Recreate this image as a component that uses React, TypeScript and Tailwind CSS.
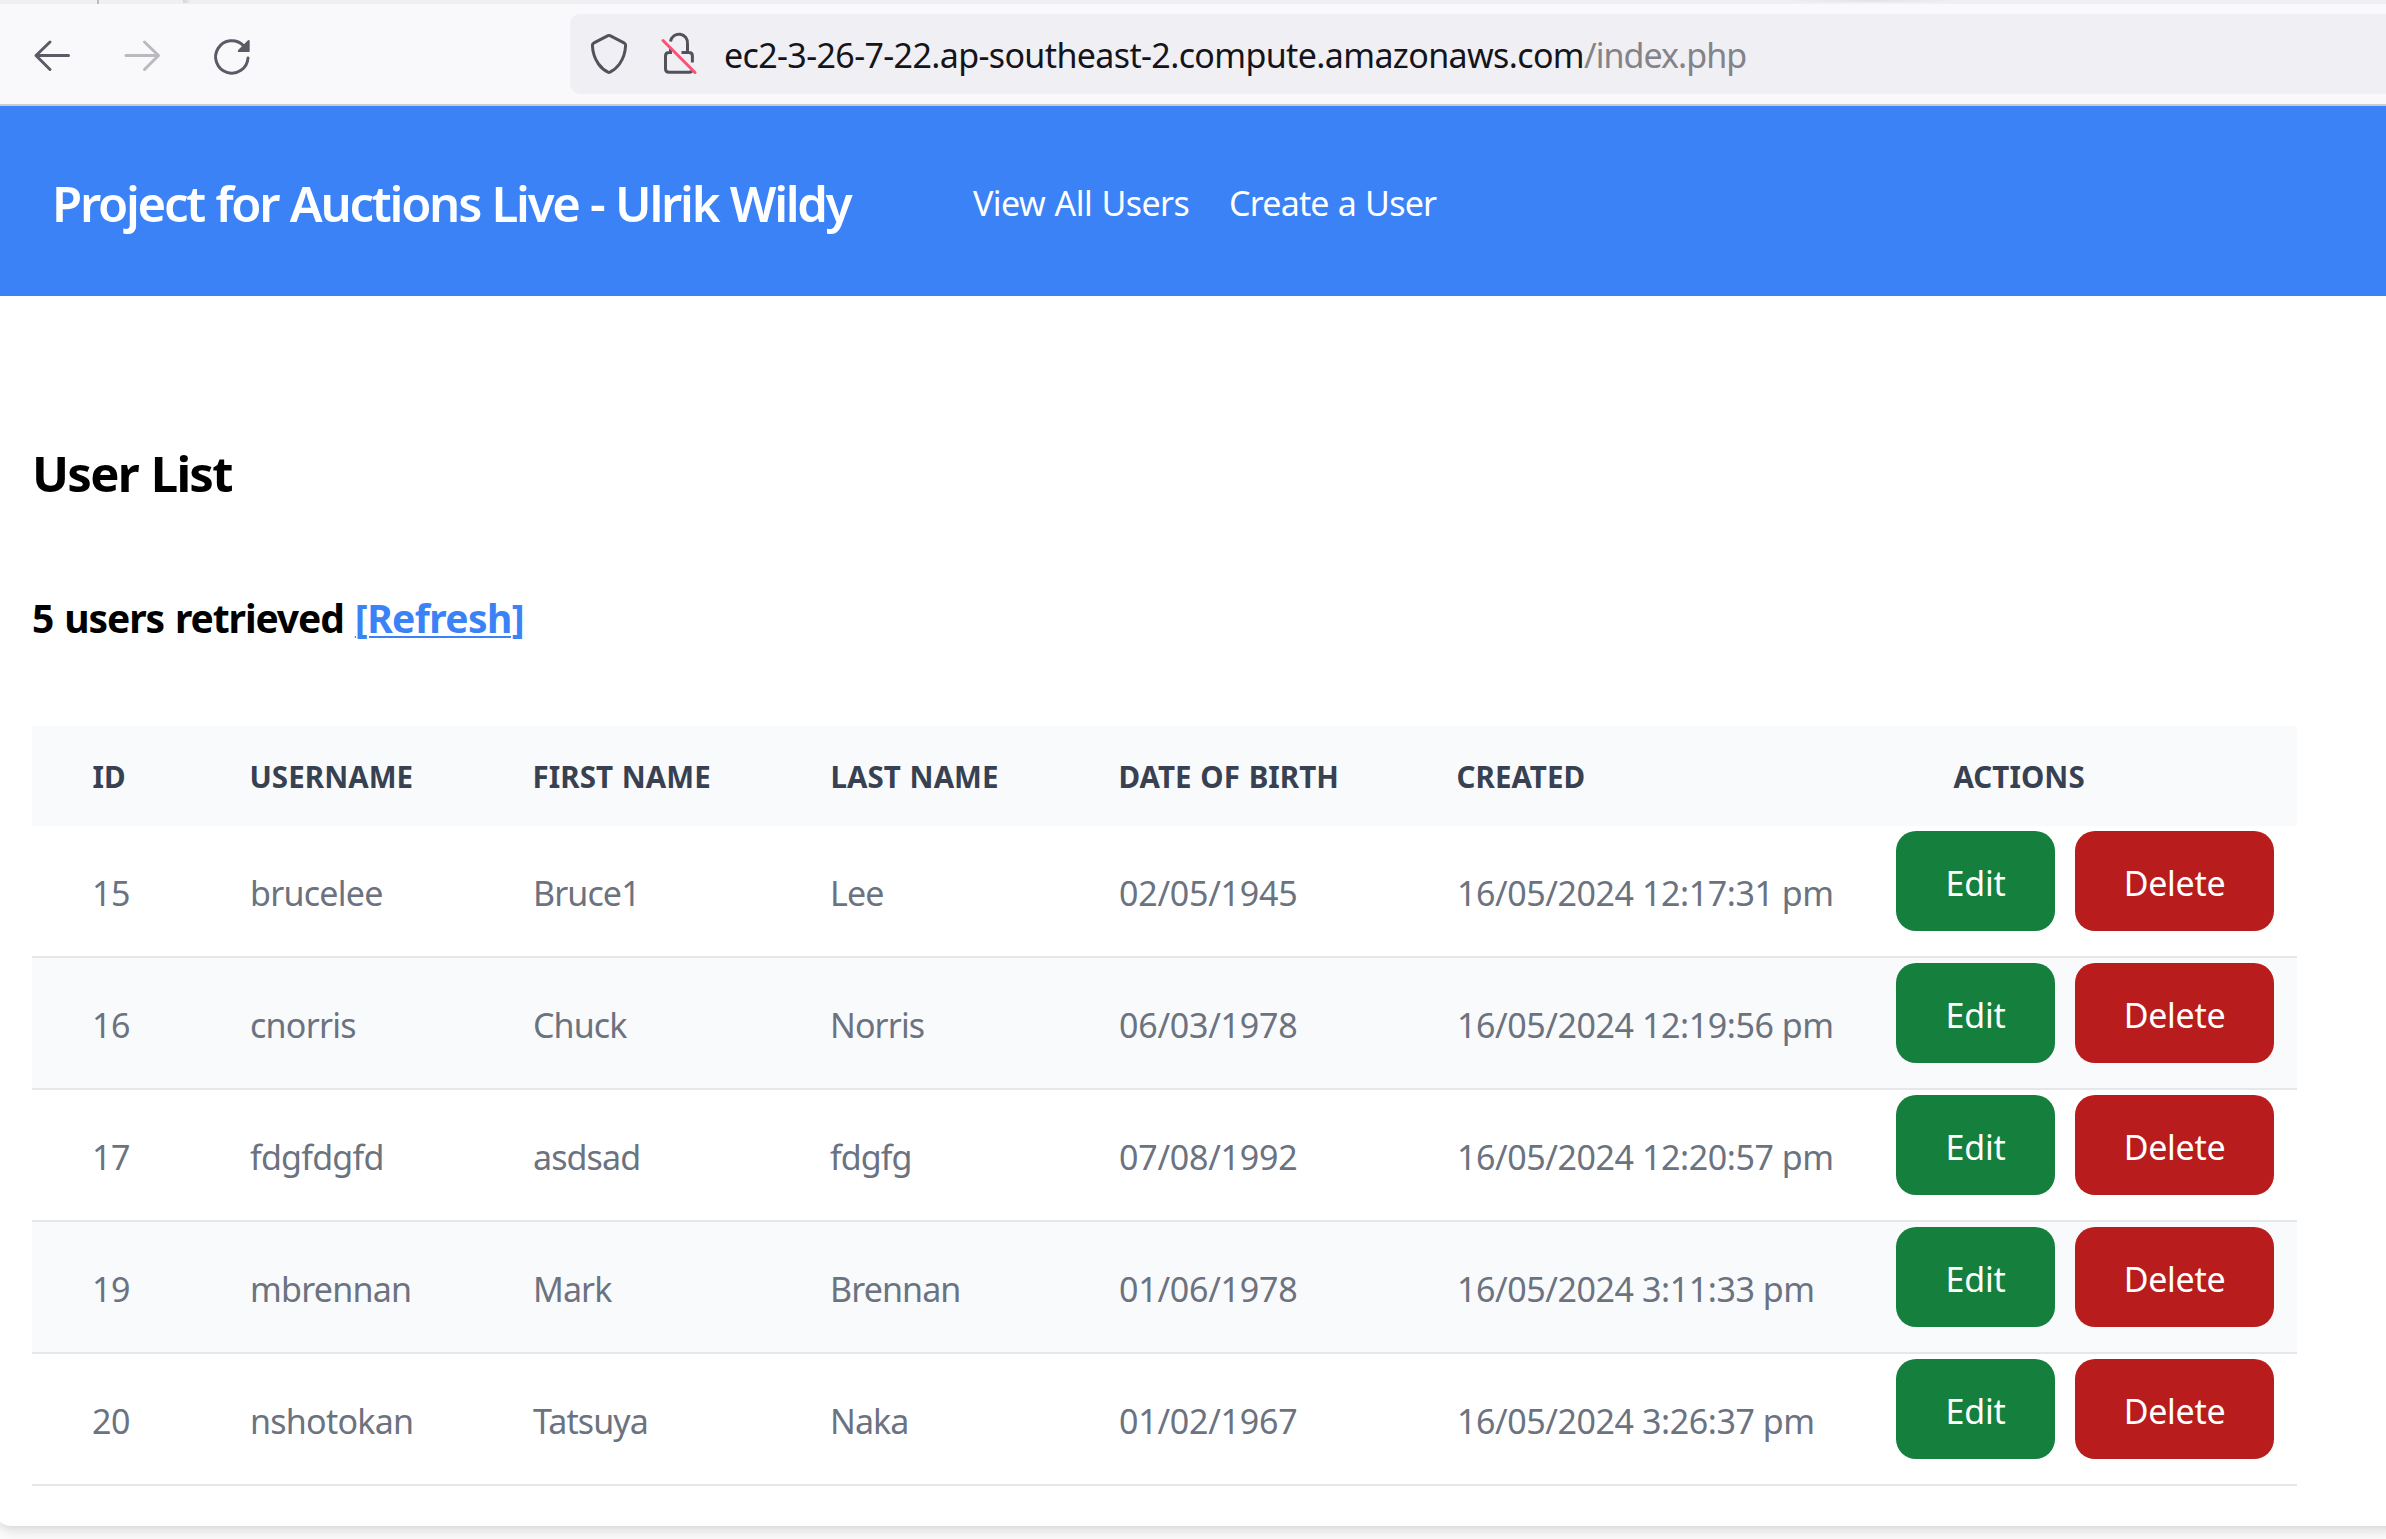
type User = {
  id: number;
  username: string;
  first: string;
  last: string;
  dob: string;
  created: string;
};

const users: User[] = [
  { id: 15, username: "brucelee", first: "Bruce1", last: "Lee", dob: "02/05/1945", created: "16/05/2024 12:17:31 pm" },
  { id: 16, username: "cnorris", first: "Chuck", last: "Norris", dob: "06/03/1978", created: "16/05/2024 12:19:56 pm" },
  { id: 17, username: "fdgfdgfd", first: "asdsad", last: "fdgfg", dob: "07/08/1992", created: "16/05/2024 12:20:57 pm" },
  { id: 19, username: "mbrennan", first: "Mark", last: "Brennan", dob: "01/06/1978", created: "16/05/2024 3:11:33 pm" },
  { id: 20, username: "nshotokan", first: "Tatsuya", last: "Naka", dob: "01/02/1967", created: "16/05/2024 3:26:37 pm" },
];

const headings = ["ID", "Username", "First name", "Last name", "Date of birth", "Created", "Actions"];

function BackIcon() {
  return (
    <svg className="ml-[30px] h-[40px] w-[45px] shrink-0" viewBox="30 34 45 40" fill="none" stroke="#5b5b66" strokeWidth="3" strokeLinecap="round" strokeLinejoin="round">
      <path d="M50 42 36 55.5 50 69.5M36.5 55.5H68.5" />
    </svg>
  );
}

function ForwardIcon() {
  return (
    <svg className="ml-[45px] h-[40px] w-[45px] shrink-0" viewBox="120 34 45 40" fill="none" stroke="#b9b9be" strokeWidth="3" strokeLinecap="round" strokeLinejoin="round">
      <path d="M144.500 42 158.500 55.500 144.500 69.500M158 55.500H126" />
    </svg>
  );
}

function ReloadIcon() {
  return (
    <svg className="ml-[45px] h-[40px] w-[45px] shrink-0" viewBox="210 34 45 40" fill="none" overflow="visible">
      <path d="M248 58A16.200 16.200 0 1 1 243.500 45.700" stroke="#5b5b66" strokeWidth="3" strokeLinecap="round" />
      <path d="M248 40.200 238.200 50Q237 52 239 52H249Q249.700 52 249.700 51V41Q249.500 39.500 248 40.200Z" fill="#5b5b66" />
    </svg>
  );
}

function ShieldIcon() {
  return (
    <svg className="ml-[20px] h-[44px] w-[38px] shrink-0" viewBox="30 32 38 44" fill="none" stroke="#52525a" strokeWidth="3" strokeLinejoin="round">
      <path d="M48 35.700Q49 35.200 50 35.700L64 42.800Q65.700 43.700 65.600 45.500C65.300 53 63 59 59.500 64Q55.500 69.500 50 72.200Q49 72.600 48 72.200Q42.500 69.500 38.500 64C35 59 32.700 53 32.400 45.500Q32.300 43.700 34 42.800Z" />
    </svg>
  );
}

function InsecureLockIcon() {
  return (
    <svg className="ml-[32px] h-[44px] w-[38px] shrink-0" viewBox="100 32 38 44" fill="none" strokeLinecap="round">
      <path d="M110.500 41.500A8.400 8.400 0 0 1 127.500 44V52.500M121.500 52.500H129Q132.400 52.500 132.400 56V62.500M110.500 49V52.500H109Q105.500 52.500 105.500 56V69Q105.500 72.300 109 72.300H129Q131 72.300 132 71" stroke="#52525a" strokeWidth="3" strokeLinecap="butt" />
      <path d="M103 40.500 135 72.500" stroke="#ff4f75" strokeWidth="3" />
    </svg>
  );
}

function BrowserChrome() {
  return (
    <div>
      <div className="flex h-[4px] bg-[#f0eff4]">
        <div className="ml-[97px] h-full w-[2px] bg-[#bdbcc2]" />
        <div className="ml-[84px] h-[3px] w-[8px] bg-linear-to-r from-[#d4d4d8] to-[#f0eff4]" />
        <div className="ml-[1590px] h-[2px] w-[180px] bg-linear-to-r from-[#f0eff4] via-[#e4e3e7] to-[#f0eff4]" />
      </div>
      <div className="flex h-[102px] items-center border-b-2 border-[#cccccc] bg-[#f9f9fb]">
        <BackIcon />
        <ForwardIcon />
        <ReloadIcon />
        <div className="ml-[315px] flex h-[80px] grow items-center rounded-l-[10px] bg-[#f0eff4] text-[34px] whitespace-nowrap text-[#15141a]">
          <ShieldIcon />
          <InsecureLockIcon />
          <span className="ml-[26px] pt-[3px] tracking-[-0.63px]">ec2-3-26-7-22.ap-southeast-2.compute.amazonaws.com</span>
          <span className="pt-[3px] tracking-[-0.95px] text-[#838388]">/index.php</span>
        </div>
      </div>
    </div>
  );
}

function SiteHeader() {
  return (
    <header className="flex h-[190px] items-center bg-[#3b82f6] pt-[5px] pl-[52px] whitespace-nowrap text-white">
      <h1 className="w-[921px] text-[49px] font-semibold tracking-[-2.25px] [word-spacing:1px]">Project for Auctions Live - Ulrik Wildy</h1>
      <nav className="flex text-[34px]">
        <a className="w-[256px] tracking-[-0.55px] [word-spacing:1px]">View All Users</a>
        <a className="tracking-[-0.8px] [word-spacing:1px]">Create a User</a>
      </nav>
    </header>
  );
}

function UserRow({ user }: { user: User }) {
  return (
    <tr className="h-[132px] odd:bg-white even:bg-[#f9fafb] [&>td]:border-b-2 [&>td]:border-[#e5e7eb]">
      <td className="pt-[4px] pl-[60px]">{user.id}</td>
      <td className="pt-[4px] pl-[61px] tracking-[-0.75px]">{user.username}</td>
      <td className="pt-[4px] pl-[61px] tracking-[-0.9px]">{user.first}</td>
      <td className="pt-[4px] pl-[60px] tracking-[-0.9px]">{user.last}</td>
      <td className="pt-[4px] pl-[61px] tracking-[-0.25px]">{user.dob}</td>
      <td className="pt-[4px] pl-[61px] tracking-[-0.43px]">{user.created}</td>
      <td className="pt-[5px] pl-[3px] align-top">
        <div className="flex gap-[20px] text-white">
          <button className="h-[100px] w-[159px] rounded-[20px] bg-[#15803d] pt-[4px] tracking-[-0.2px]">Edit</button>
          <button className="h-[100px] w-[199px] rounded-[20px] bg-[#b91c1c] pt-[4px] tracking-[-0.3px]">Delete</button>
        </div>
      </td>
    </tr>
  );
}

export default function App() {
  return (
    <div className="flex h-[1539px] w-[2386px] flex-col overflow-hidden bg-white font-['Noto_Sans',sans-serif]">
      <BrowserChrome />
      <SiteHeader />
      <main className="flex flex-col">
        <h2 className="mt-[142px] ml-[32px] text-[49px] leading-[70px] font-bold tracking-[-1.75px] text-black [word-spacing:2px]">User List</h2>
        <h3 className="mt-[80px] ml-[32px] text-[39px] leading-[60px] font-bold tracking-[-1.1px] text-black [word-spacing:2px]">
          5 users retrieved{" "}
          <a className="tracking-[-0.6px] text-[#3b82f6] underline decoration-2 underline-offset-[3px]">[Refresh]</a>
        </h3>
        <section className="mt-[36px] -mr-[20px] -ml-[8px] h-[842px] rounded-[20px] bg-white pt-[42px] pl-[40px] shadow-[0_10px_15px_-2.5px_rgba(0,0,0,0.1),0_5px_10px_-5px_rgba(0,0,0,0.1)]">
          <table className="w-[2265px] table-fixed border-separate border-spacing-0 text-left text-[34px] leading-[50px] tracking-[-0.35px] whitespace-nowrap text-[#6b7280]">
            <colgroup>
              <col className="w-[157px]" />
              <col className="w-[283px]" />
              <col className="w-[298px]" />
              <col className="w-[288px]" />
              <col className="w-[338px]" />
              <col className="w-[497px]" />
              <col className="w-[404px]" />
            </colgroup>
            <thead>
              <tr className="h-[100px] bg-[#f9fafb] text-[29.5px] tracking-[0.05px] text-[#374151] uppercase">
                {headings.map((heading) => (
                  <th key={heading} className="pt-[2px] pl-[60.5px] font-bold [word-spacing:1px]">{heading}</th>
                ))}
              </tr>
            </thead>
            <tbody>
              {users.map((user) => (
                <UserRow key={user.id} user={user} />
              ))}
            </tbody>
          </table>
        </section>
      </main>
    </div>
  );
}
